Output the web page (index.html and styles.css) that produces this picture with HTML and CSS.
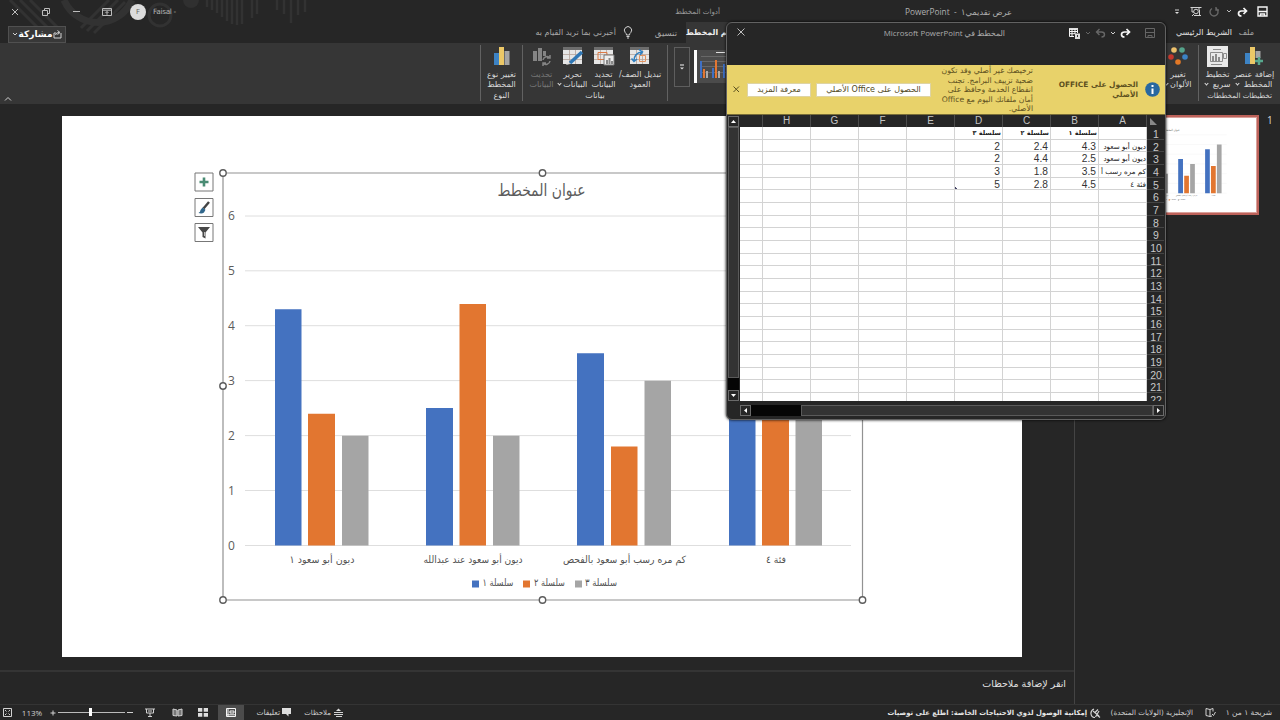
FILE: index.html
```
<!DOCTYPE html>
<html lang="ar">
<head>
<meta charset="utf-8">
<title>PowerPoint</title>
<link rel="stylesheet" href="styles.css">
</head>
<body>
<div class="app">
  <header class="top">
    <svg class="decor" width="320" height="43" viewBox="0 0 320 43">
      <g fill="none" stroke="#323232">
        <path d="M64 0A37 37 0 0 0 132 0" stroke-width="7"/>
        <circle cx="160" cy="15" r="11" stroke-width="3"/>
        <path d="M10 0L46 36M20 0L52 32M30 0L58 28M81 28L109 0M87 31L118 0M94 33L125 2" stroke-width="3"/>
        <path d="M207 0V7M212 0V10M217 0V13M222 0V17M227 0V21M232 0V24M237 0V25M242 0V24M252 0V18M257 0V14M277 0V10M284 0V14M291 0V23M298 0V15M305 0V12" stroke-width="2.5"/>
      </g>
      <circle cx="191" cy="0" r="8" fill="#303030"/>
    </svg>
    <div class="titlebar">
      <svg class="ic" width="8" height="8"><path d="M1 1L7 7M7 1L1 7"/></svg>
      <svg class="ic" width="8" height="8"><path d="M.5 2.5h5v5h-5zM2.5 2.5v-2h5v5h-2"/></svg>
      <svg class="ic" width="8" height="8"><path d="M1 3.5H8"/></svg>
      <svg class="ic" width="10" height="8"><path d="M.5 .5h9v7h-9zM.5 2.2h9M5 6.8V3.5M3.5 5L5 3.5L6.500 5"/></svg>
      <span class="avatar">F</span>
      <span class="user">Faisal -</span>
      <span class="context" dir="rtl">أدوات المخطط</span>
      <span class="doc"><bdi>PowerPoint</bdi>&nbsp; - &nbsp;<bdi dir="rtl">عرض تقديمي١</bdi></span>
      <svg class="ic lit" width="6" height="6"><path d="M1 1H5"/><path d="M1 3h4L3 5z" class="solid"/></svg>
      <svg class="ic lit" width="12" height="11"><path d="M.5 1.500h11M2 2v4h2M9.500 4v5M4 9.500h7M8 3h2"/><circle cx="6" cy="5.500" r="2.300"/><path d="M4 8L2 10"/></svg>
      <svg class="ic off" width="10" height="10"><path d="M7.500 1.800A4 4 0 1 1 3 1.500M7 0V3H10" stroke-width="1.400"/></svg>
      <svg class="ic" width="6" height="5"><path d="M1 1L3 3L5 1"/></svg>
      <svg class="ic bright" width="11" height="10"><path d="M9 4H4.500Q1.500 4 1.500 6.500T4.500 9M6.500 1L9.500 4L6.500 7" stroke-width="1.700"/></svg>
      <svg class="ic bright" width="11" height="11"><path d="M1 1h9v9H1zM1 5.500h9M3.500 10V8h4v2" stroke-width="1.400"/></svg>
    </div>
    <nav class="tabs">
      <button class="share" dir="rtl"><svg class="ic lit" width="9" height="9"><path d="M3 3H1v5h7V3M2.500 5Q3 2.500 6 2.500M4.500 .5L7 2.500L4.500 4.500"/></svg><b>مشاركة</b><svg class="ic lit" width="6" height="5"><path d="M1 1L3 3L5 1"/></svg></button>
      <span class="tell" dir="rtl">أخبرني بما تريد القيام به</span>
      <svg class="ic lit bulb" width="10" height="13"><path d="M3.500 9Q3.500 7.500 2.200 6.500A3.600 3.600 0 1 1 7.800 6.500Q6.500 7.500 6.500 9zM3.500 10.500h3M4 12h2"/></svg>
      <span class="tab format" dir="rtl">تنسيق</span>
      <span class="tab active" dir="rtl">تصميم المخطط</span>
      <span class="tab home" dir="rtl">الشريط الرئيسي</span>
      <span class="tab file" dir="rtl">ملف</span>
    </nav>
  </header>

  <section class="ribbon">
    <div class="collapse"><svg class="ic lit" width="8" height="6"><path d="M1 4.500L4 1.500L7 4.500"/></svg></div>
    <div class="group type">
      <div class="btns">
        <div class="btn"><svg width="18" height="20"><path fill="#3d83c4" d="M1 7h5v12H1z"/><path fill="#ecc867" d="M6 1h5v18H6z"/><path fill="#a5a5a5" d="M11.500 5h5v14h-5z"/></svg><span dir="rtl">تغيير نوع<br>المخطط</span></div>
      </div>
      <div class="label" dir="rtl">النوع</div>
    </div>
    <div class="group data">
      <div class="btns">
        <div class="btn dim"><svg width="20" height="20"><path fill="#858585" d="M1 5h4v10H1zM6 2h4v13H6zM11 5h3v5h-3z"/><path d="M11 14a4 4 0 0 1 7-2M18 9v3h-3M18 15a4 4 0 0 1-7 2M11 20v-3h3" fill="none" stroke="#858585" stroke-width="1.500"/></svg><span dir="rtl">تحديث<br>البيانات</span></div>
        <div class="btn"><svg width="22" height="20"><use href="#sheetIcon"/><path d="M8 17L20 6" stroke="#2f77b5" stroke-width="3.500"/><path d="M4 19l4-1-2-2z" fill="#ddd"/></svg><span dir="rtl">تحرير<br>البيانات <i class="car"></i></span></div>
        <div class="btn"><svg width="22" height="20"><use href="#sheetIcon"/><path d="M5 6.500h9v7H5z" fill="none" stroke="#dc7a45" stroke-width="1"/><path d="M11 9h10v10H11z" fill="#eee" stroke="#777"/><path d="M13 18v-4h2v4zM15.500 18v-6h2v6zM18 18v-3h2v3z" fill="#888"/></svg><span dir="rtl">تحديد<br>البيانات</span></div>
        <div class="btn wide"><svg width="22" height="20"><use href="#sheetIcon"/><path d="M10.500 9.500h6v6h-6z" fill="none" stroke="#e3935f"/><path d="M5 15Q5 7 13 6M10 3.500L13.500 6L11 9M2.500 12.500L5 15.500L8 13" fill="none" stroke="#2f7fc0" stroke-width="1.500"/></svg><span dir="rtl">تبديل الصف/<br>العمود</span></div>
      </div>
      <div class="label" dir="rtl">بيانات</div>
    </div>
    <div class="gallery">
      <div class="more"><svg class="ic bright" width="6" height="7"><path d="M1 1h4"/><path class="solid" d="M1 3.500h4L3 5.500z"/></svg></div>
      <svg class="style" width="46" height="40" viewBox="0 0 46 40"><path fill="#4b4b4b" d="M0 3h46v33H0z"/><path fill="#fff" d="M0 3h3v33H0z"/><path stroke="#686868" d="M7 9.500h39M7 14.500h39M7 19.500h39M7 25.500h39"/><path stroke="#ddd" d="M22 5.500h9"/><path fill="#3f70c4" d="M6 14h2v17H6zM18 21h2v10h-2zM29 17h2v14h-2z"/><path fill="#e27632" d="M9 22h2v9H9zM21 13h2v18h-2zM32 24h2v7h-2z"/><path fill="#aaa" d="M12 24h2v7h-2zM24 24h2v7h-2z"/></svg>
    </div>
    <div class="group colors">
      <div class="btns"><div class="btn"><svg width="20" height="20"><circle cx="6" cy="4" r="2.800" fill="#ecc06b"/><circle cx="14" cy="4" r="2.800" fill="#55a38b"/><circle cx="3" cy="11" r="2.800" fill="#c5372c"/><circle cx="17" cy="11" r="2.800" fill="#3b82c4"/><circle cx="10" cy="16" r="2.800" fill="#e27826"/></svg><span dir="rtl">تغيير<br>الألوان <i class="car"></i></span></div></div>
    </div>
    <div class="group layouts">
      <div class="btns">
        <div class="btn"><svg width="22" height="21"><path fill="#e9e9e9" d="M0 0h21v21H0z"/><path fill="none" stroke="#8b8b8b" d="M6 3.500h8M3.500 6.500h12v9h-12zM16.500 7.500h3v5h-3zM4 18.500h11"/><path fill="#8b8b8b" d="M5 10h2v5H5zM8 8h2v7H8zM11 11h2v4h-2z"/></svg><span dir="rtl">تخطيط<br>سريع &nbsp;<i class="car"></i></span></div>
        <div class="btn wide"><svg width="20" height="20"><path fill="#3d83c4" d="M1 7h5v11H1z"/><path fill="#ecc867" d="M6 1h5v17H6z"/><path fill="#a5a5a5" d="M11.500 5h5v7h-5z"/><path d="M15 11v8M11 15h8" stroke="#58a88e" stroke-width="2.500"/></svg><span dir="rtl">إضافة عنصر<br>المخطط &nbsp;<i class="car"></i></span></div>
      </div>
      <div class="label" dir="rtl">تخطيطات المخططات</div>
    </div>
  </section>

  <main class="work">
    <div class="editor">
      <div class="slide">
        <svg width="960" height="541" viewBox="62 116 960 541">
          <defs>
            <g id="sheetIcon"><path fill="#e6e6e6" d="M1 1h19v17H1z"/><path fill="#6d6d6d" d="M1 1h19v3H1z"/><path d="M1 8.500h19M1 13.500h19M7.500 4v14M13.500 4v14" stroke="#b5a39b" stroke-width=".8"/></g>
            <g id="chart">
              <path d="M245 216h606M245 270.800h606M245 325.700h606M245 380.600h606M245 435.600h606M245 490.500h606M245 545.500h606" stroke="#dedede"/>
              <path fill="#4472c0" d="M275 309.200h26.500v236.300H275zM426 408h27v137.500h-27zM577 353.200h27v192.300h-27zM729 298.200h26.500v247.300H729z"/>
              <path fill="#e27630" d="M308 413.800h27v131.700h-27zM459.500 304h26.500v241.500h-26.500zM611 446.600h26.500v98.900H611zM762 391.600h27v153.900h-27z"/>
              <path fill="#a5a5a5" d="M342 435.700h26.500v109.800H342zM493 435.700h26.500v109.800H493zM644.500 380.700h26.500v164.800h-26.500zM795.500 270.800h26.500v274.700h-26.500z"/>
              <g class="axis"><text x="231.500" y="220">6</text><text x="231.500" y="275">5</text><text x="231.500" y="330">4</text><text x="231.500" y="384.500">3</text><text x="231.500" y="439.500">2</text><text x="231.500" y="494.500">1</text><text x="231.500" y="549.500">0</text></g>
              <text class="ctitle" x="541.500" y="196" textLength="88" lengthAdjust="spacingAndGlyphs">عنوان المخطط</text>
              <g class="cats">
                <text x="322" y="563" textLength="65" lengthAdjust="spacingAndGlyphs">ديون أبو سعود ١</text>
                <text x="473" y="563" textLength="99" lengthAdjust="spacingAndGlyphs">ديون أبو سعود عند عبدالله</text>
                <text x="624.500" y="563" textLength="123" lengthAdjust="spacingAndGlyphs">كم مره رسب أبو سعود بالفحص</text>
                <text x="776" y="563" textLength="20" lengthAdjust="spacingAndGlyphs">فئة ٤</text>
                <text x="498" y="586" textLength="31" lengthAdjust="spacingAndGlyphs">سلسلة ١</text>
                <text x="549.500" y="586" textLength="31" lengthAdjust="spacingAndGlyphs">سلسلة ٢</text>
                <text x="601" y="586" textLength="32" lengthAdjust="spacingAndGlyphs">سلسلة ٣</text>
              </g>
              <path fill="#4472c0" d="M472 580.500h7v7h-7z"/><path fill="#e27630" d="M523 580.500h7v7h-7z"/><path fill="#a5a5a5" d="M575 580.500h7v7h-7z"/>
            </g>
          </defs>
          <use href="#chart"/>
          <path d="M223 173H862.500V600H223z" fill="none" stroke="#929292" stroke-width="1.200"/>
          <g fill="#fff" stroke="#5c5c5c" stroke-width="1.400"><circle cx="223" cy="173" r="3.200"/><circle cx="542.500" cy="173" r="3.200"/><circle cx="223" cy="386" r="3.200"/><circle cx="223" cy="600" r="3.200"/><circle cx="542.500" cy="600" r="3.200"/><circle cx="862.500" cy="600" r="3.200"/></g>
          <g fill="#fff" stroke="#777"><path d="M195 173h18v18h-18zM195 198.500h18v18h-18zM195 223.500h18v18h-18z"/></g>
          <path d="M204 177.500v9M199.500 182h9" stroke="#4a8c74" stroke-width="2.600"/>
          <path d="M209 202l-5.500 6.500" stroke="#444" stroke-width="2.400"/><path d="M198.500 213q2-1 2-3l2-2.500 3 2.300-1.500 2.700q-2 1.500-5.500.5z" fill="#31678c"/>
          <path d="M198 227h12l-4.500 5.500v6l-3-1.500v-4.500z" fill="#484848"/><path d="M204.500 232v4" stroke="#bbb"/>
        </svg>
      </div>
      <div class="notes" dir="rtl"><span>انقر لإضافة ملاحظات</span></div>
    </div>
    <aside class="thumbs">
      <svg class="thumb" width="170" height="96" viewBox="62 116 960 541"><use href="#chart"/></svg>
      <span class="num">1</span>
    </aside>
  </main>

  <footer class="status">
    <svg class="ic lit" width="9" height="9"><path d="M.5 .5h8v8h-8zM2 2l1.500 1.500M7 2L5.500 3.500M2 7l1.500-1.500M7 7L5.500 5.500"/></svg>
    <span class="pct">113%</span>
    <svg class="ic lit" width="6" height="6"><path d="M3 .5v5M.5 3h5"/></svg>
    <div class="zoom"><i></i></div>
    <svg class="ic lit" width="6" height="6"><path d="M0 2.500h6"/></svg>
    <svg class="ic lit" width="10" height="9"><path d="M0 1h10M1.500 1v4h7V1M5 5v3M3 8.500h4M3 3h4"/></svg>
    <svg class="ic lit" width="11" height="9"><path d="M1 1l4 1v6L1 7.500zM10 1L6 2v6l4-.5z" fill="#777"/></svg>
    <svg class="ic" width="10" height="9"><path class="solid" d="M0 0h4.300v3.700H0zM5.700 0H10v3.700H5.700zM0 5h4.300v3.700H0zM5.700 5H10v3.700H5.700z"/></svg>
    <div class="view"><svg class="ic bright" width="10" height="9"><path d="M.5 .5h9v8h-9zM2 0v8M4 3h4v2H4zM1 6.800h8"/></svg></div>
    <span dir="rtl">تعليقات</span>
    <svg class="ic" width="10" height="9"><path class="solid" d="M0 0h9v6H6.500v2.500L4 6H0z"/></svg>
    <span class="memo" dir="rtl">ملاحظات</span>
    <svg class="ic lit" width="9" height="9"><path d="M0 4.500h9M0 6.500h9M2 8.500h6"/><path class="solid" d="M2 3L4.500 .5L7 3z"/></svg>
    <b class="access" dir="rtl">إمكانية الوصول لذوي الاحتياجات الخاصة: اطلع على توصيات</b>
    <svg class="ic lit" width="11" height="10"><path d="M4 1Q.5 2.500 1 6t4 3.500M3 3l6 5M9 3L5.500 9M4.500 5L8 1.500M7 7l3 2.500" stroke-width="1.200"/></svg>
    <span class="lang" dir="rtl">الإنجليزية (الولايات المتحدة)</span>
    <svg class="ic lit" width="11" height="9"><path d="M5 1.500L1 .5v7l4 1zM5 1.500L8 .5v3M5 8.500l2-.5M7 6l1.500 1.500L10.500 4"/></svg>
    <span class="count" dir="rtl">شريحة ١ من ١</span>
  </footer>
</div>

<section class="window">
  <div class="wtitle">
    <svg class="ic" width="8" height="8"><path d="M.5 .5L7.500 7.500M7.500 .5L.5 7.500"/></svg>
    <span class="wname" dir="rtl">المخطط في <bdi>Microsoft PowerPoint</bdi></span>
    <svg class="ic bright" width="11" height="11"><path class="solid" d="M0 0h9v2H0z"/><path d="M.5 1v7.500H5M0 3.500h9M0 5.700h6M3 1v7.500M6 1v5M8.500 2v3"/><path class="solid" d="M6 5.500h5V11H6z"/><path d="M8.500 7v2" stroke="#333"/></svg>
    <svg class="ic off" width="6" height="5"><path d="M1 1L3 3L5 1"/></svg>
    <svg class="ic off" width="11" height="10"><path d="M2 4H6.500Q9.500 4 9.500 6.500T6.500 9M4.500 1L1.500 4L4.500 7" stroke-width="1.400"/></svg>
    <svg class="ic lit" width="6" height="5"><path d="M1 1L3 3L5 1"/></svg>
    <svg class="ic bright" width="11" height="10"><path d="M9 4H4.500Q1.500 4 1.500 6.500T4.500 9M6.500 1L9.500 4L6.500 7" stroke-width="1.700"/></svg>
    <svg class="ic off save" width="10" height="10"><path d="M.5 .5h9v9h-9zM1 4.500h8M3 9.500v-2h4v2"/></svg>
  </div>
  <div class="banner">
    <svg class="ic dark" width="7" height="7"><path d="M.5 .5L6 6M6 .5L.5 6"/></svg>
    <button class="b1" dir="rtl">معرفة المزيد</button>
    <button class="b2" dir="rtl">الحصول على Office الأصلي</button>
    <p dir="rtl">ترخيصك غير أصلي وقد تكون<br>ضحية تزييف البرامج. تجنب<br>انقطاع الخدمة وحافظ على<br>أمان ملفاتك اليوم مع Office<br>الأصلي.</p>
    <b dir="rtl">الحصول على OFFICE<br>الأصلي</b>
    <svg width="15" height="15"><circle cx="7.500" cy="7.500" r="7.300" fill="#2868a0"/><path d="M7.500 3v2M7.500 6.500V12" stroke="#fff" stroke-width="2"/></svg>
  </div>
  <div class="body">
    <div class="vbar"><i class="sq"><svg width="5" height="3"><path fill="#fff" d="M0 3h5L2.500 0z"/></svg></i><i class="vthumb"></i><i class="vgap"></i><i class="sq"><svg width="5" height="3"><path fill="#fff" d="M0 0h5L2.500 3z"/></svg></i></div>
    <div class="sheet" id="sheet"></div>
    <div class="hbar"><i class="sq"><svg width="3" height="5"><path fill="#fff" d="M3 0v5L0 2.500z"/></svg></i><i class="hgap"></i><i class="hthumb"></i><i class="sq"><svg width="3" height="5"><path fill="#fff" d="M0 0v5L3 2.500z"/></svg></i></div>
  </div>
</section>
<script src="sheet.js"></script>
</body>
</html>
```

FILE: styles.css
```
* { box-sizing: border-box; }
body { margin: 0; width: 1280px; height: 720px; overflow: hidden; background: #262626; color: #d8d8d8; font: 8px/10px "DejaVu Sans", sans-serif; white-space: nowrap; }
svg { display: block; flex: none; }
button { margin: 0; padding: 0; border: 0; font: inherit; color: inherit; white-space: nowrap; }
.app { display: flex; flex-direction: column; height: 720px; }
.ic { fill: none; stroke: #bdbdbd; stroke-width: 1; }
.ic .solid { fill: #dedede; stroke: none; }
.ic.lit { stroke: #d2d2d2; }
.ic.bright { stroke: #f6f6f6; }
.ic.off { stroke: #666; }
.ic.dark { stroke: #5a5020; }

.top { position: relative; height: 43px; }
.decor { position: absolute; left: 0; top: 0; }
.titlebar { position: relative; display: grid; height: 22px; padding-top: 1px; align-items: center; justify-items: center;
  grid-template-columns: 30px 31px 30px 32px 30px 24px 543px 444px 26px 12px 24px 6px 20px 20px; }
.avatar { width: 16px; height: 16px; border-radius: 50%; background: #dcdcdc; color: #666; text-align: center; line-height: 16px; font-size: 7px; }
.user { font: 7.3px/10px "DejaVu Sans", sans-serif; letter-spacing: -.3px; color: #b4b4b4; justify-self: start; }
.context { justify-self: end; font-size: 7.100px; color: #9a9a9a; }
.doc { justify-self: end; margin-right: 152px; color: #b0b0b0; font: 8.300px/10px "Open Sans", "DejaVu Sans", sans-serif; }

.tabs { position: relative; height: 21px; display: grid; align-items: center;
  grid-template-columns: 66px 550px 24px 46px 72px 474px 35px; }
.share { display: flex; align-items: center; justify-content: space-between; width: 58px; height: 17px; margin: 3px 0 0 8px; padding: 0 3px; background: #383838; border: 1px solid #505050; color: #fff; font-size: 9px; }
.tell { color: #a9a9a9; font-size: 8px; }
.bulb { margin-left: 7px; }
.tab { color: #a9a9a9; font-size: 8px; }
.tab.format { padding-right: 9px; font-size: 8.500px; }
.tab.active { align-self: stretch; background: #363636; color: #eee; line-height: 21px; padding-right: 12px; font-weight: bold; font-size: 7.800px; }
.tab.home { color: #e4e4e4; }
.tab.file { padding-right: 13px; }

.ribbon { height: 61px; background: #363636; display: grid; grid-template-columns: 480px 42px 146px 490px 41px 81px; }
.collapse { display: flex; align-items: flex-end; padding: 0 0 2px 4px; }
.group { border-left: 1px solid #626262; margin: 2px 0 3px; display: flex; flex-direction: column; justify-content: space-between; }
.group.data { border-right: 1px solid #626262; }
.group.colors { border-left: 0; border-right: 1px solid #626262; }
.group.layouts { border-left: 0; }
.btns { display: flex; justify-content: center; padding-top: 1px; }
.data .btns { justify-content: flex-start; padding-left: 3px; }
.btn { width: 31px; display: flex; flex-direction: column; align-items: center; height: 44px; font-size: 8px; line-height: 10px; text-align: center; }
.btn svg { height: 21px; margin-bottom: 3px; }
.btn.wide { width: 42px; }
.btn.dim { color: #767676; }
.layouts .btns { justify-content: flex-start; padding-left: 3px; }
.car { display: inline-block; width: 3px; height: 3px; border: solid #ddd; border-width: 0 1px 1px 0; transform: rotate(45deg); margin-bottom: 2px; }
.label { text-align: center; line-height: 9px; font-size: 8px; padding-bottom: 1px; }
.layouts .label { font-size: 7.100px; }
.layouts .label { padding-left: 0; }
.gallery { display: flex; gap: 4px; margin: 4px 0 0 6px; height: 40px; }
.more { width: 16px; border: 1px solid #5e5e5e; display: flex; align-items: center; justify-content: center; }

.work { display: grid; grid-template-columns: 1074px 206px; height: 601px; border-bottom: 1px solid #343434; }
.editor { padding-top: 12px; }
.slide { width: 960px; height: 541px; margin-left: 62px; background: #fff; }
.axis text { font: 12px "Open Sans", sans-serif; fill: #5c5c5c; text-anchor: middle; }
.ctitle { font: 17px "DejaVu Sans", sans-serif; fill: #5c5c5c; text-anchor: middle; }
.cats text { font: 10px "DejaVu Sans", sans-serif; fill: #525252; text-anchor: middle; }
.notes { margin-top: 13px; border-top: 2px solid #343434; padding: 6px 8px; font-size: 9.500px; line-height: 12px; color: #e2e2e2; }
.thumbs { border-left: 1px solid #444; display: flex; padding: 11px 0 0 10px; align-items: flex-start; }
.thumb { box-sizing: content-box; border: 2px solid #bd625a; outline: 1px solid #d9a19b; outline-offset: -3px; background: #fff; }
.num { margin-left: 8px; font: 10px/10px "Open Sans", sans-serif; }

.status { height: 15px; display: grid; align-items: center; justify-items: center; font-size: 7.500px; line-height: 12px; color: #cfcfcf;
  grid-template-columns: 15px 34px 7px 70px 8px 32px 22px 30px 26px 36px 14px 37px 14px 742px 16px 90px 34px 45px; }
.status > [dir] { justify-self: end; }
.pct { font: 8px/12px "Open Sans", sans-serif; }
.zoom { width: 67px; height: 9px; display: flex; justify-content: center; background: linear-gradient(#bbb, #bbb) 0 4px / 100% 1px no-repeat; }
.zoom i { width: 3px; height: 8px; background: #fff; margin-right: 2px; }
.view { width: 26px; height: 15px; background: #4c4c4c; display: flex; align-items: center; justify-content: center; }
.status .memo { font-size: 7px; }
.status .access { color: #e6e6e6; font-size: 6.850px; }
.status .lang { font-size: 7.150px; }

.window { position: absolute; left: 726px; top: 22px; width: 440px; height: 398px; border: 1px solid #626262; border-radius: 6px; background: #262626; overflow: hidden; box-shadow: 0 0 3px #000; }
.wtitle { height: 42px; display: flex; align-items: center; padding-bottom: 22px; }
.wtitle svg:first-child { margin: 0 0 2px 10px; }
.wname { width: 260px; text-align: right; color: #ababab; font: 7.850px/11px "Open Sans", "DejaVu Sans", sans-serif; }
.wname + svg { margin: 0 5px 0 64px; }
.wtitle svg:nth-child(n+5) { margin-left: 4px; }
.wtitle .save { margin-left: 14px !important; }
.banner { height: 50px; background: #e8d26a; color: #5d5020; display: grid; align-items: center; grid-template-columns: 20px 69px 123px 94px 105px 28px; border-bottom: 1px solid #786d37; }
.banner > svg:first-child { margin-left: 6px; }
.banner button { height: 14px; background: #fff; border: 1px solid #ded4a4; color: #514925; font-size: 8px; line-height: 10px; }
.b1 { width: 64px; }
.b2 { width: 115px; }
.banner p { margin: 0; padding-top: 1px; line-height: 9.600px; font-size: 7.650px; }
.banner b { font-size: 7.400px; }
.banner > svg:last-child { margin-left: 7px; }
.body { display: grid; grid-template-columns: 13px 1fr; grid-template-rows: 286px 1fr; }
.vbar { display: flex; flex-direction: column; padding: 1px 1px 0; }
.sq { width: 11px; height: 11px; border: 1px solid #6a6a6a; display: flex; align-items: center; justify-content: center; }
.vthumb { height: 251px; border: 1px solid #5a5a5a; background: #333; }
.vgap { height: 12px; background: #050505; }
.hbar { grid-column: 2; display: flex; padding-top: 4px; }
.hgap { width: 50px; height: 11px; background: #050505; }
.hthumb { width: 352px; height: 11px; border: 1px solid #5a5a5a; background: #333; }
.sheet { display: grid; grid-template-columns: 23px repeat(8, 48px) 17px; grid-template-rows: 12px; grid-auto-rows: 12.680px; height: 286px; overflow: hidden; direction: ltr; }
.cell { background: #fff; border: solid #d3d3d3; border-width: 0 1px 1px 0; color: #333; font: 10.200px/13px "Liberation Sans", "DejaVu Sans", sans-serif; text-align: right; padding-right: 2px; }
.cell.ar { font: 7.300px/13px "DejaVu Sans", sans-serif; color: #222; padding-right: 0; }
.cell.series { font-size: 6.500px; font-weight: bold; padding-right: 1px; }
.cell.long { font-size: 7.150px; }
.head { color: #c4c4c4; border-right: 1px solid #4b4b4b; font: 10px/12px "Liberation Sans", sans-serif; text-align: center; }
.rowhead { color: #c8c8c8; border-bottom: 1px solid #444; font: 10.500px/14px "Liberation Sans", sans-serif; text-align: center; padding-left: 1px; }
.corner { padding: 3px 0 0 3px; }
.cell.end { background: linear-gradient(45deg, #446 2px, #fff 2px); }
```

FILE: sheet.js
```
const columns = ['', 'H', 'G', 'F', 'E', 'D', 'C', 'B', 'A'];
const rows = [
  { D: 'سلسلة ٣', C: 'سلسلة ٢', B: 'سلسلة ١' },
  { D: '2', C: '2.4', B: '4.3', A: 'ديون أبو سعود' },
  { D: '2', C: '4.4', B: '2.5', A: 'ديون أبو سعود' },
  { D: '3', C: '1.8', B: '3.5', A: 'كم مره رسب أ' },
  { D: '5', C: '2.8', B: '4.5', A: 'فئة ٤' }
];
const sheet = document.getElementById('sheet');
let html = columns.map(c => `<div class="head">${c}</div>`).join('') +
  '<div class="corner"><svg width="7" height="7"><path fill="#888" d="M0 0v7h7z"/></svg></div>';
for (let r = 0; r < 22; r++) {
  for (const c of columns) {
    const value = (rows[r] && rows[r][c]) || '';
    const classes = ['cell'];
    const arabic = /[\u0600-\u06ff]/.test(value);
    if (arabic) classes.push('ar');
    if (arabic && r === 0) classes.push('series');
    if (value.length > 10) classes.push('long');
    if (r === 4 && c === 'D') classes.push('end');
    html += `<div class="${classes.join(' ')}"${arabic ? ' dir="rtl"' : ''}>${value}</div>`;
  }
  html += `<div class="rowhead">${r + 1}</div>`;
}
sheet.innerHTML = html;
```
